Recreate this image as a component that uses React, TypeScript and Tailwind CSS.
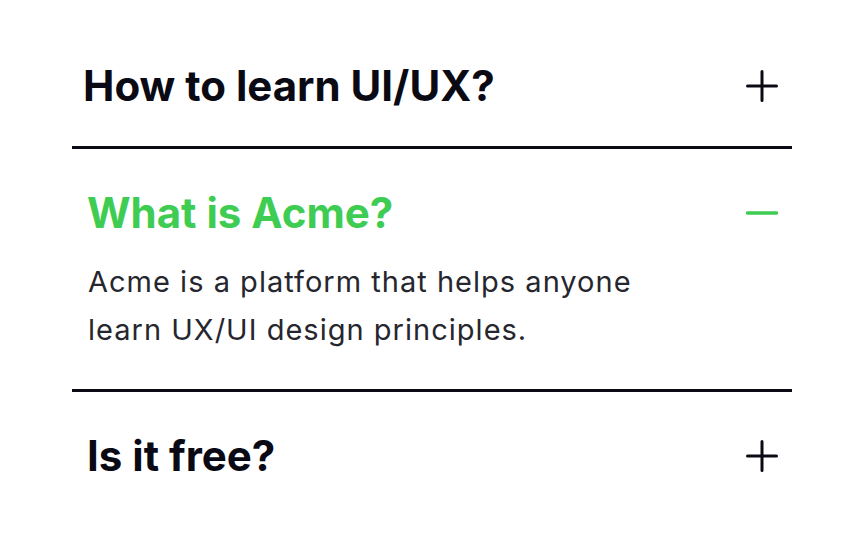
import React from "react";

const Plus = () => (
  <svg width="32" height="32" viewBox="0 0 32 32" fill="none" stroke="#0a0a14" strokeWidth="3" strokeLinecap="round">
    <path d="M16 1.5v29M1.5 16h29" />
  </svg>
);

const Minus = () => (
  <svg width="32" height="32" viewBox="0 0 32 32" fill="none" stroke="#3ecc52" strokeWidth="3.5" strokeLinecap="round">
    <path d="M1.5 16h29" />
  </svg>
);

export default function App() {
  return (
    <div className="min-h-[540px] w-full bg-white" style={{ fontFamily: "Inter, 'Noto Sans', sans-serif" }}>
      <div className="mx-auto w-[720px] pt-[22px]">
        <div className="border-b-[3px] border-[#0a0a14]">
          <div className="flex items-center justify-between pl-[11px] pr-[14px] pt-10 pb-9">
            <span className="text-[42px] font-bold leading-[48px] text-[#0a0a14]">How to learn UI/UX?</span>
            <Plus />
          </div>
        </div>
        <div className="border-b-[3px] border-[#0a0a14]">
          <div className="flex items-center justify-between pl-[15px] pr-[14px] pt-10">
            <span className="text-[42px] font-bold leading-[48px] text-[#3ecc52]">What is Acme?</span>
            <Minus />
          </div>
          <p className="pl-[16px] pt-[21px] pb-[35px] text-[29px] leading-[48px] tracking-[0.035em] text-[#26262e]">
            Acme is a platform that helps anyone
            <br />
            learn UX/UI design principles.
          </p>
        </div>
        <div>
          <div className="flex items-center justify-between pl-[15px] pr-[14px] pt-10 pb-9">
            <span className="text-[42px] font-bold leading-[48px] text-[#0a0a14]">Is it free?</span>
            <Plus />
          </div>
        </div>
      </div>
    </div>
  );
}
